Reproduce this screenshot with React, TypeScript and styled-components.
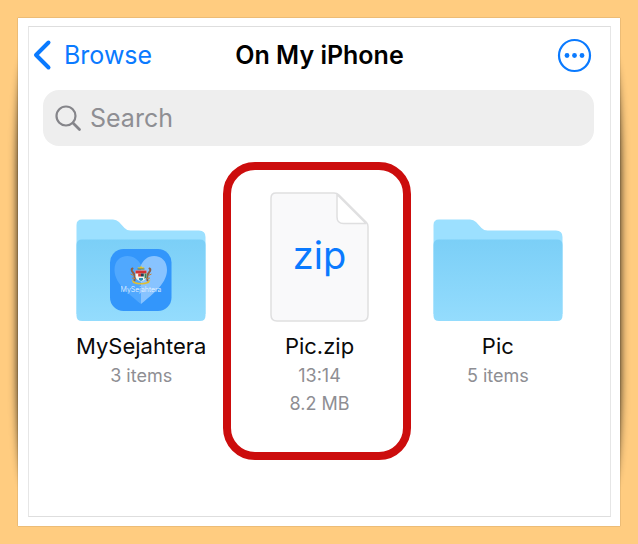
import React from "react";
import styled, { createGlobalStyle } from "styled-components";

const GlobalStyle = createGlobalStyle`
  *, *::before, *::after { box-sizing: border-box; }
  body {
    margin: 0;
    background: #ffcc80;
    font-family: Inter, "Liberation Sans", sans-serif;
    color: #0a0a0a;
  }
`;

const Page = styled.main`
  min-height: 100vh;
  padding: 18px;
  display: flex;
  flex-direction: column;
  isolation: isolate;
`;

const Card = styled.div`
  position: relative;
  flex: 1;
  display: flex;
  padding: 8px 9px 9px 10px;
  background: #fff;
  box-shadow: 0 0 1px rgba(0, 0, 0, 0.45);

  &::before {
    content: "";
    position: absolute;
    z-index: -1;
    inset: 8% 0;
    border-radius: 10px / 120px;
    box-shadow: 0 0 10px rgba(0, 0, 0, 0.9);
  }

  &::after {
    content: "";
    position: absolute;
    z-index: -1;
    inset: 0;
    background: #fff;
  }
`;

const Screen = styled.section`
  flex: 1;
  min-width: 0;
  border: 1px solid #dedede;
  border-right-color: #e6e6e6;
  border-left-color: #e6e6e6;
`;

const Header = styled.header`
  display: grid;
  grid-template-columns: 1fr auto 1fr;
  align-items: center;
  height: 56px;
  padding: 0 18px 0 4px;
`;

const BackLink = styled.a`
  display: flex;
  align-items: center;
  gap: 12px;
  color: #0a7aff;
  font-size: 25px;
  line-height: 32px;
  text-decoration: none;
`;

const Title = styled.h1`
  margin: 0 0 0 14px;
  font-size: 25px;
  line-height: 32px;
  font-weight: 600;
  color: #000;
`;

const MoreButton = styled.button`
  justify-self: end;
  display: flex;
  padding: 0;
  border: 0;
  background: none;
  cursor: pointer;
`;

const SearchBar = styled.label`
  display: flex;
  align-items: center;
  gap: 8px;
  height: 56px;
  margin: 7px 16px 0 14px;
  padding: 0 12px;
  border-radius: 16px;
  background: #eeeeee;
`;

const SearchInput = styled.input`
  flex: 1;
  min-width: 0;
  padding: 0;
  border: 0;
  outline: 0;
  background: none;
  font: inherit;
  font-size: 25px;
  line-height: 32px;
  color: #000;

  &::placeholder {
    color: #8e8e93;
    opacity: 1;
  }
`;

const FileGrid = styled.ul`
  display: grid;
  grid-template-columns: repeat(3, 1fr);
  margin: 0;
  padding: 46px 23px 0;
  list-style: none;
`;

const Tile = styled.li`
  position: relative;
  display: flex;
  flex-direction: column;
  align-items: center;
  text-align: center;
`;

const Highlight = styled.span`
  position: absolute;
  inset: -30px -2px -42px -7px;
  border: 8px solid #cc0d0d;
  border-radius: 32px;
  pointer-events: none;
`;

const IconArea = styled.div`
  display: flex;
  align-items: flex-end;
  height: 130px;
  margin-bottom: 8px;

  svg { display: block; }
`;

const Name = styled.span`
  font-size: 22px;
  line-height: 32px;
`;

const Detail = styled.span`
  font-size: 18px;
  line-height: 28px;
  color: #8e8e93;
`;

function BackIcon() {
  return (
    <svg width="19" height="32" viewBox="0 0 19 32" fill="none" stroke="#0a7aff" strokeWidth="4" strokeLinecap="round" strokeLinejoin="round" aria-hidden="true">
      <path d="M15.500 3.500 3 16l12.500 12.500" />
    </svg>
  );
}

function MoreIcon() {
  return (
    <svg width="35" height="35" viewBox="0 0 35 35" fill="none" aria-hidden="true">
      <circle cx="17.500" cy="17.500" r="15.500" stroke="#0a7aff" strokeWidth="2.200" />
      <g fill="#0a7aff">
        <circle cx="10" cy="17.500" r="2.400" />
        <circle cx="17.500" cy="17.500" r="2.400" />
        <circle cx="25" cy="17.500" r="2.400" />
      </g>
    </svg>
  );
}

function SearchIcon() {
  return (
    <svg width="27" height="27" viewBox="0 0 27 27" fill="none" stroke="#85858a" strokeLinecap="round" aria-hidden="true">
      <circle cx="11" cy="11" r="9.500" strokeWidth="2.200" />
      <path d="m18 18 6.500 6.500" strokeWidth="2.800" />
    </svg>
  );
}

function AppBadge() {
  return (
    <g transform="translate(34 30)">
      <rect width="61.500" height="62" rx="13.500" fill="#3396fb" />
      <path d="M31 55C23 48 4.500 36 4.500 21C4.500 12 10 7 17.500 7C24 7 28.500 11 31 16Z" fill="#50a8fe" />
      <path d="M31 55C39 48 57 36 57 21C57 12 51.500 7 44 7C37.500 7 33.500 11 31 16Z" fill="#88c3ff" />
      <g fill="none" stroke="#8b6048" strokeWidth="2" strokeLinecap="round">
        <path d="M22.500 19.500q-2 1 .5 4t1.500 8" />
        <path d="M39.500 19.500q2 1-.5 4t-1.500 8" />
      </g>
      <path d="m20.500 25 3 1.500M22 29l3 .5M41.500 25l-3 1.500M40 29l-3 .5" stroke="#c0833b" strokeWidth="1" />
      <path d="M31 16.500l1 2 2.500-.5-1.500 2h-4l-1.500-2 2.500.5z" fill="#e8c52a" />
      <path d="M27.500 20h7" stroke="#6f7a38" strokeWidth="1" />
      <path d="M25.500 21.500h11v6.500q-1 3-5.500 4.500-4.500-1.500-5.500-4.500z" fill="#f4f4ed" />
      <path d="M25.500 21.500h11v3h-11z" fill="#d23131" />
      <path d="M28.200 24.500H31v3h-2.800z" fill="#d83b36" />
      <path d="M31 24.500h2.800v3H31z" fill="#263a50" />
      <path d="M34.500 24.500h2v4l-2 1.500z" fill="#398354" />
      <path d="M29 29h4v2l-2 1-2-1z" fill="#2b8eb4" />
      <path d="M21.500 30.500q4 3.500 9.500 3.500t9.500-3.500l-1.500 3.500q-4 1.500-8 1.500t-8-1.500z" fill="#e1bd31" />
      <text x="31" y="43" textAnchor="middle" fontFamily="Inter, sans-serif" fontSize="7" fontWeight="300" fill="#eaf5ff">MySejahtera</text>
    </g>
  );
}

function FolderIcon({ id, withBadge = false }: { id: string; withBadge?: boolean }) {
  return (
    <svg width="130" height="103" viewBox="0 0 130 103" aria-hidden={!withBadge}>
      <defs>
        <linearGradient id={id} x1="0" y1="0" x2="0" y2="1">
          <stop offset="0" stopColor="#7bcff7" />
          <stop offset="1" stopColor="#94dcfd" />
        </linearGradient>
      </defs>
      <path d="M.5 95V6q0-5.500 5.500-5.500h31q3.500 0 6 2.500l5.500 6q2.500 2.500 6 2.500H123q6.500 0 6.500 6.500V95z" fill="#9ce0ff" />
      <path d="M.5 26q0-5.500 5.500-5.500h118q5.500 0 5.500 5.500v70.500q0 5.500-5.500 5.500H6q-5.500 0-5.500-5.500z" fill={`url(#${id})`} />
      {withBadge && <AppBadge />}
    </svg>
  );
}

function ZipIcon() {
  return (
    <svg width="99" height="130" viewBox="0 0 99 130" role="img" aria-label="zip file">
      <path d="M6 1h58q3 0 5 2l27.500 27.500q1.500 1.500 1.500 4V123q0 6-6 6H7q-6 0-6-6V6q0-5 5-5z" fill="#f9f9fa" stroke="#dfdfe0" strokeWidth="1.500" />
      <path d="M67 2.500V25q0 6.500 6.500 6.500h22.500z" fill="#fff" stroke="#dfdfe0" strokeWidth="1.500" strokeLinejoin="round" />
      <text x="49.500" y="77" textAnchor="middle" fontFamily="Inter, sans-serif" fontSize="38" fill="#0a7aff">zip</text>
    </svg>
  );
}

interface FileItem {
  name: string;
  details: string[];
  icon: React.ReactNode;
  highlighted?: boolean;
}

const files: FileItem[] = [
  { name: "MySejahtera", details: ["3 items"], icon: <FolderIcon id="folder-mysejahtera" withBadge /> },
  { name: "Pic.zip", details: ["13:14", "8.2 MB"], icon: <ZipIcon />, highlighted: true },
  { name: "Pic", details: ["5 items"], icon: <FolderIcon id="folder-pic" /> },
];

export default function App() {
  return (
    <>
      <GlobalStyle />
      <Page>
        <Card>
          <Screen>
            <Header>
              <BackLink href="#browse"><BackIcon />Browse</BackLink>
              <Title>On My iPhone</Title>
              <MoreButton type="button" aria-label="More options"><MoreIcon /></MoreButton>
            </Header>
            <SearchBar>
              <SearchIcon />
              <SearchInput type="search" placeholder="Search" aria-label="Search" />
            </SearchBar>
            <FileGrid>
              {files.map((file) => (
                <Tile key={file.name}>
                  <IconArea>{file.icon}</IconArea>
                  <Name>{file.name}</Name>
                  {file.details.map((detail) => <Detail key={detail}>{detail}</Detail>)}
                  {file.highlighted && <Highlight />}
                </Tile>
              ))}
            </FileGrid>
          </Screen>
        </Card>
      </Page>
    </>
  );
}
